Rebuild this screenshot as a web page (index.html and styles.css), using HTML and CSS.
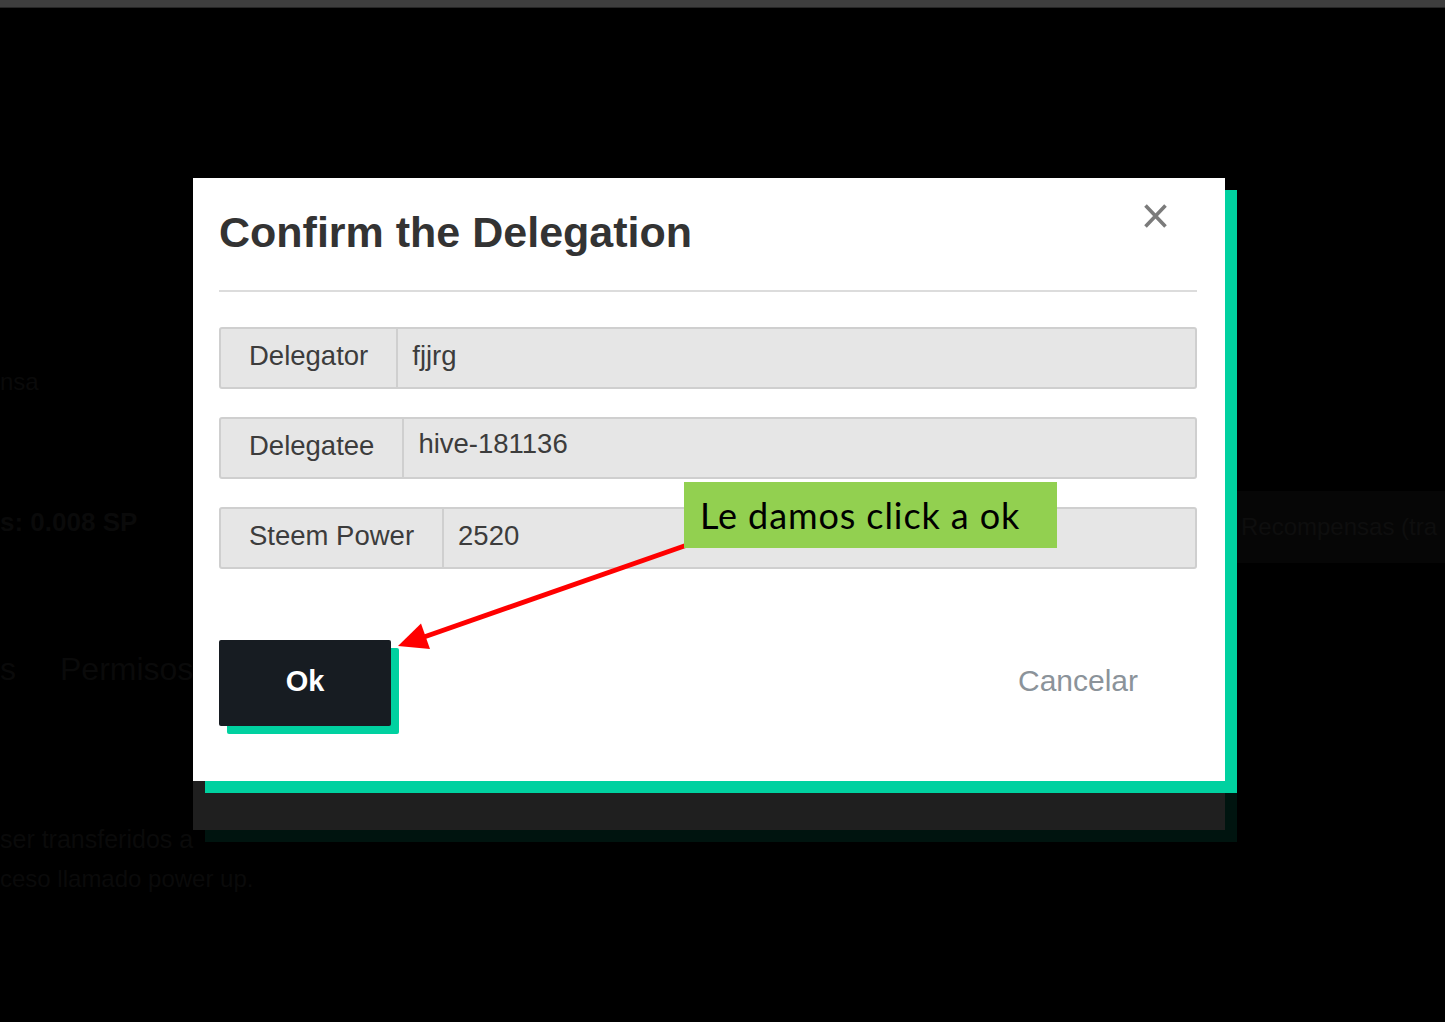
FILE: index.html
```html
<!DOCTYPE html>
<html lang="es">
<head>
<meta charset="utf-8">
<title>Confirm the Delegation</title>
<link rel="stylesheet" href="styles.css">
</head>
<body>
<div class="topbar"></div>
<main class="page">
  <div class="page-body">
    <div class="left-col">
      <p class="bg-t t1">nsa</p>
      <p class="bg-t t2">s: 0.008 SP</p>
      <p class="bg-t t3">s<span class="gap"></span>Permisos</p>
      <p class="bg-t t4">ser transferidos a</p>
      <p class="bg-t t5">ceso llamado power up.</p>
    </div>
    <div class="right-col">
      <div class="rewards">Recompensas (tra</div>
    </div>
  </div>
</main>

<div class="modal" role="dialog" aria-labelledby="mtitle">
  <div class="modal-header">
    <h1 id="mtitle" class="modal-title">Confirm the Delegation</h1>
    <button class="close" aria-label="Close">
      <svg width="25" height="26" viewBox="0 0 25 26"><path d="M2.5 2.5 L22.5 23.5 M22.5 2.5 L2.5 23.5" stroke="#7b7b7b" stroke-width="3.6" fill="none"/></svg>
    </button>
  </div>
  <div class="modal-body">
    <div class="field">
      <span class="field-label">Delegator</span>
      <span class="field-value">fjjrg</span>
    </div>
    <div class="field">
      <span class="field-label">Delegatee</span>
      <span class="field-value raised">hive-181136</span>
    </div>
    <div class="field">
      <span class="field-label">Steem Power</span>
      <span class="field-value">2520</span>
    </div>
  </div>
  <div class="modal-footer">
    <button class="btn-ok">Ok</button>
    <button class="btn-cancel">Cancelar</button>
  </div>
</div>

<svg class="arrow" width="310" height="130" viewBox="390 530 310 130">
  <line x1="690" y1="544" x2="424" y2="637" stroke="#ff0000" stroke-width="5"/>
  <polygon points="398,646 421,623.5 430,649" fill="#ff0000"/>
</svg>
<div class="note">Le damos click a ok</div>
</body>
</html>
```

FILE: styles.css
```css
* { box-sizing: border-box; }

html, body {
  margin: 0;
  padding: 0;
  background: #000;
  font-family: "Liberation Sans", Arial, sans-serif;
}

body {
  width: 1445px;
  height: 1022px;
  overflow: hidden;
  position: relative;
}

.topbar {
  height: 8px;
  background: #3e3e3e;
  border-bottom: 1px solid #262626;
}

.page-body {
  display: grid;
  grid-template-columns: 1fr 208px;
}

.bg-t {
  margin: 0;
  color: #0a0a0a;
  white-space: nowrap;
}
.t1 { margin-top: 359px; font-size: 24px; line-height: 30px; }
.t2 { margin-top: 108px; font-size: 26px; line-height: 34px; font-weight: bold; }
.t3 { margin-top: 110px; font-size: 32px; line-height: 40px; }
.t3 .gap { display: inline-block; width: 44px; }
.t4 { margin-top: 135px; font-size: 25px; line-height: 30px; }
.t5 { margin-top: 10px; font-size: 24px; line-height: 30px; }

.right-col { padding-top: 483px; }
.rewards {
  height: 72px;
  background: #060606;
  color: #0e0e0e;
  font-size: 24px;
  display: flex;
  align-items: center;
  padding-left: 4px;
  white-space: nowrap;
}

/* Modal */
.modal {
  position: absolute;
  left: 193px;
  top: 178px;
  width: 1032px;
  height: 603px;
  background: #fff;
  padding: 0 28px 0 26px;
  box-shadow:
    12px 12px 0 #00d1a0,
    0 49px 0 #1f1f1f,
    12px 61px 0 #00140f;
}

.modal-header {
  height: 114px;
  display: flex;
  justify-content: space-between;
  align-items: flex-start;
  border-bottom: 2px solid #dcdcdc;
}

.modal-title {
  margin: 30px 0 0 0;
  font-size: 43px;
  line-height: 48px;
  font-weight: bold;
  color: #333;
}

.close {
  margin: 25px 29px 0 0;
  padding: 0;
  border: 0;
  background: none;
  width: 25px;
  height: 26px;
  display: block;
}
.close svg { display: block; }

.modal-body {
  padding-top: 35px;
  display: flex;
  flex-direction: column;
  gap: 28px;
}

.field {
  display: flex;
  height: 62px;
  background: #e6e6e6;
  border: 2px solid #cfcfcf;
  border-radius: 3px;
  font-size: 27.5px;
  color: #3c3c3c;
}

.field-label {
  display: flex;
  align-items: center;
  padding: 0 28px 5px 28px;
  border-right: 2px solid #cfcfcf;
  white-space: nowrap;
}

.field-value {
  display: flex;
  align-items: center;
  padding: 0 0 5px 14px;
}
.field-value.raised { padding-bottom: 9px; }

.modal-footer {
  margin-top: 71px;
  display: flex;
  justify-content: space-between;
  align-items: center;
}

.btn-ok {
  width: 172px;
  height: 86px;
  background: #171c22;
  color: #fff;
  border: 0;
  border-radius: 2px;
  font-family: inherit;
  font-size: 29px;
  font-weight: bold;
  box-shadow: 8px 8px 0 #00d1a0;
  padding: 0 0 3px 0;
}

.btn-cancel {
  width: 238px;
  height: 86px;
  background: none;
  border: 0;
  color: #8b939a;
  font-family: inherit;
  font-size: 30px;
  padding: 0 0 5px 0;
}

/* Annotation overlay */
.arrow {
  position: absolute;
  left: 390px;
  top: 530px;
}

.note {
  position: absolute;
  left: 684px;
  top: 482px;
  width: 373px;
  height: 66px;
  background: #92d050;
  color: #000;
  font-family: Lato, "Open Sans", sans-serif;
  font-size: 36px;
  letter-spacing: 0.9px;
  line-height: 66px;
  padding: 0 0 0 16px;
  white-space: nowrap;
}
```
